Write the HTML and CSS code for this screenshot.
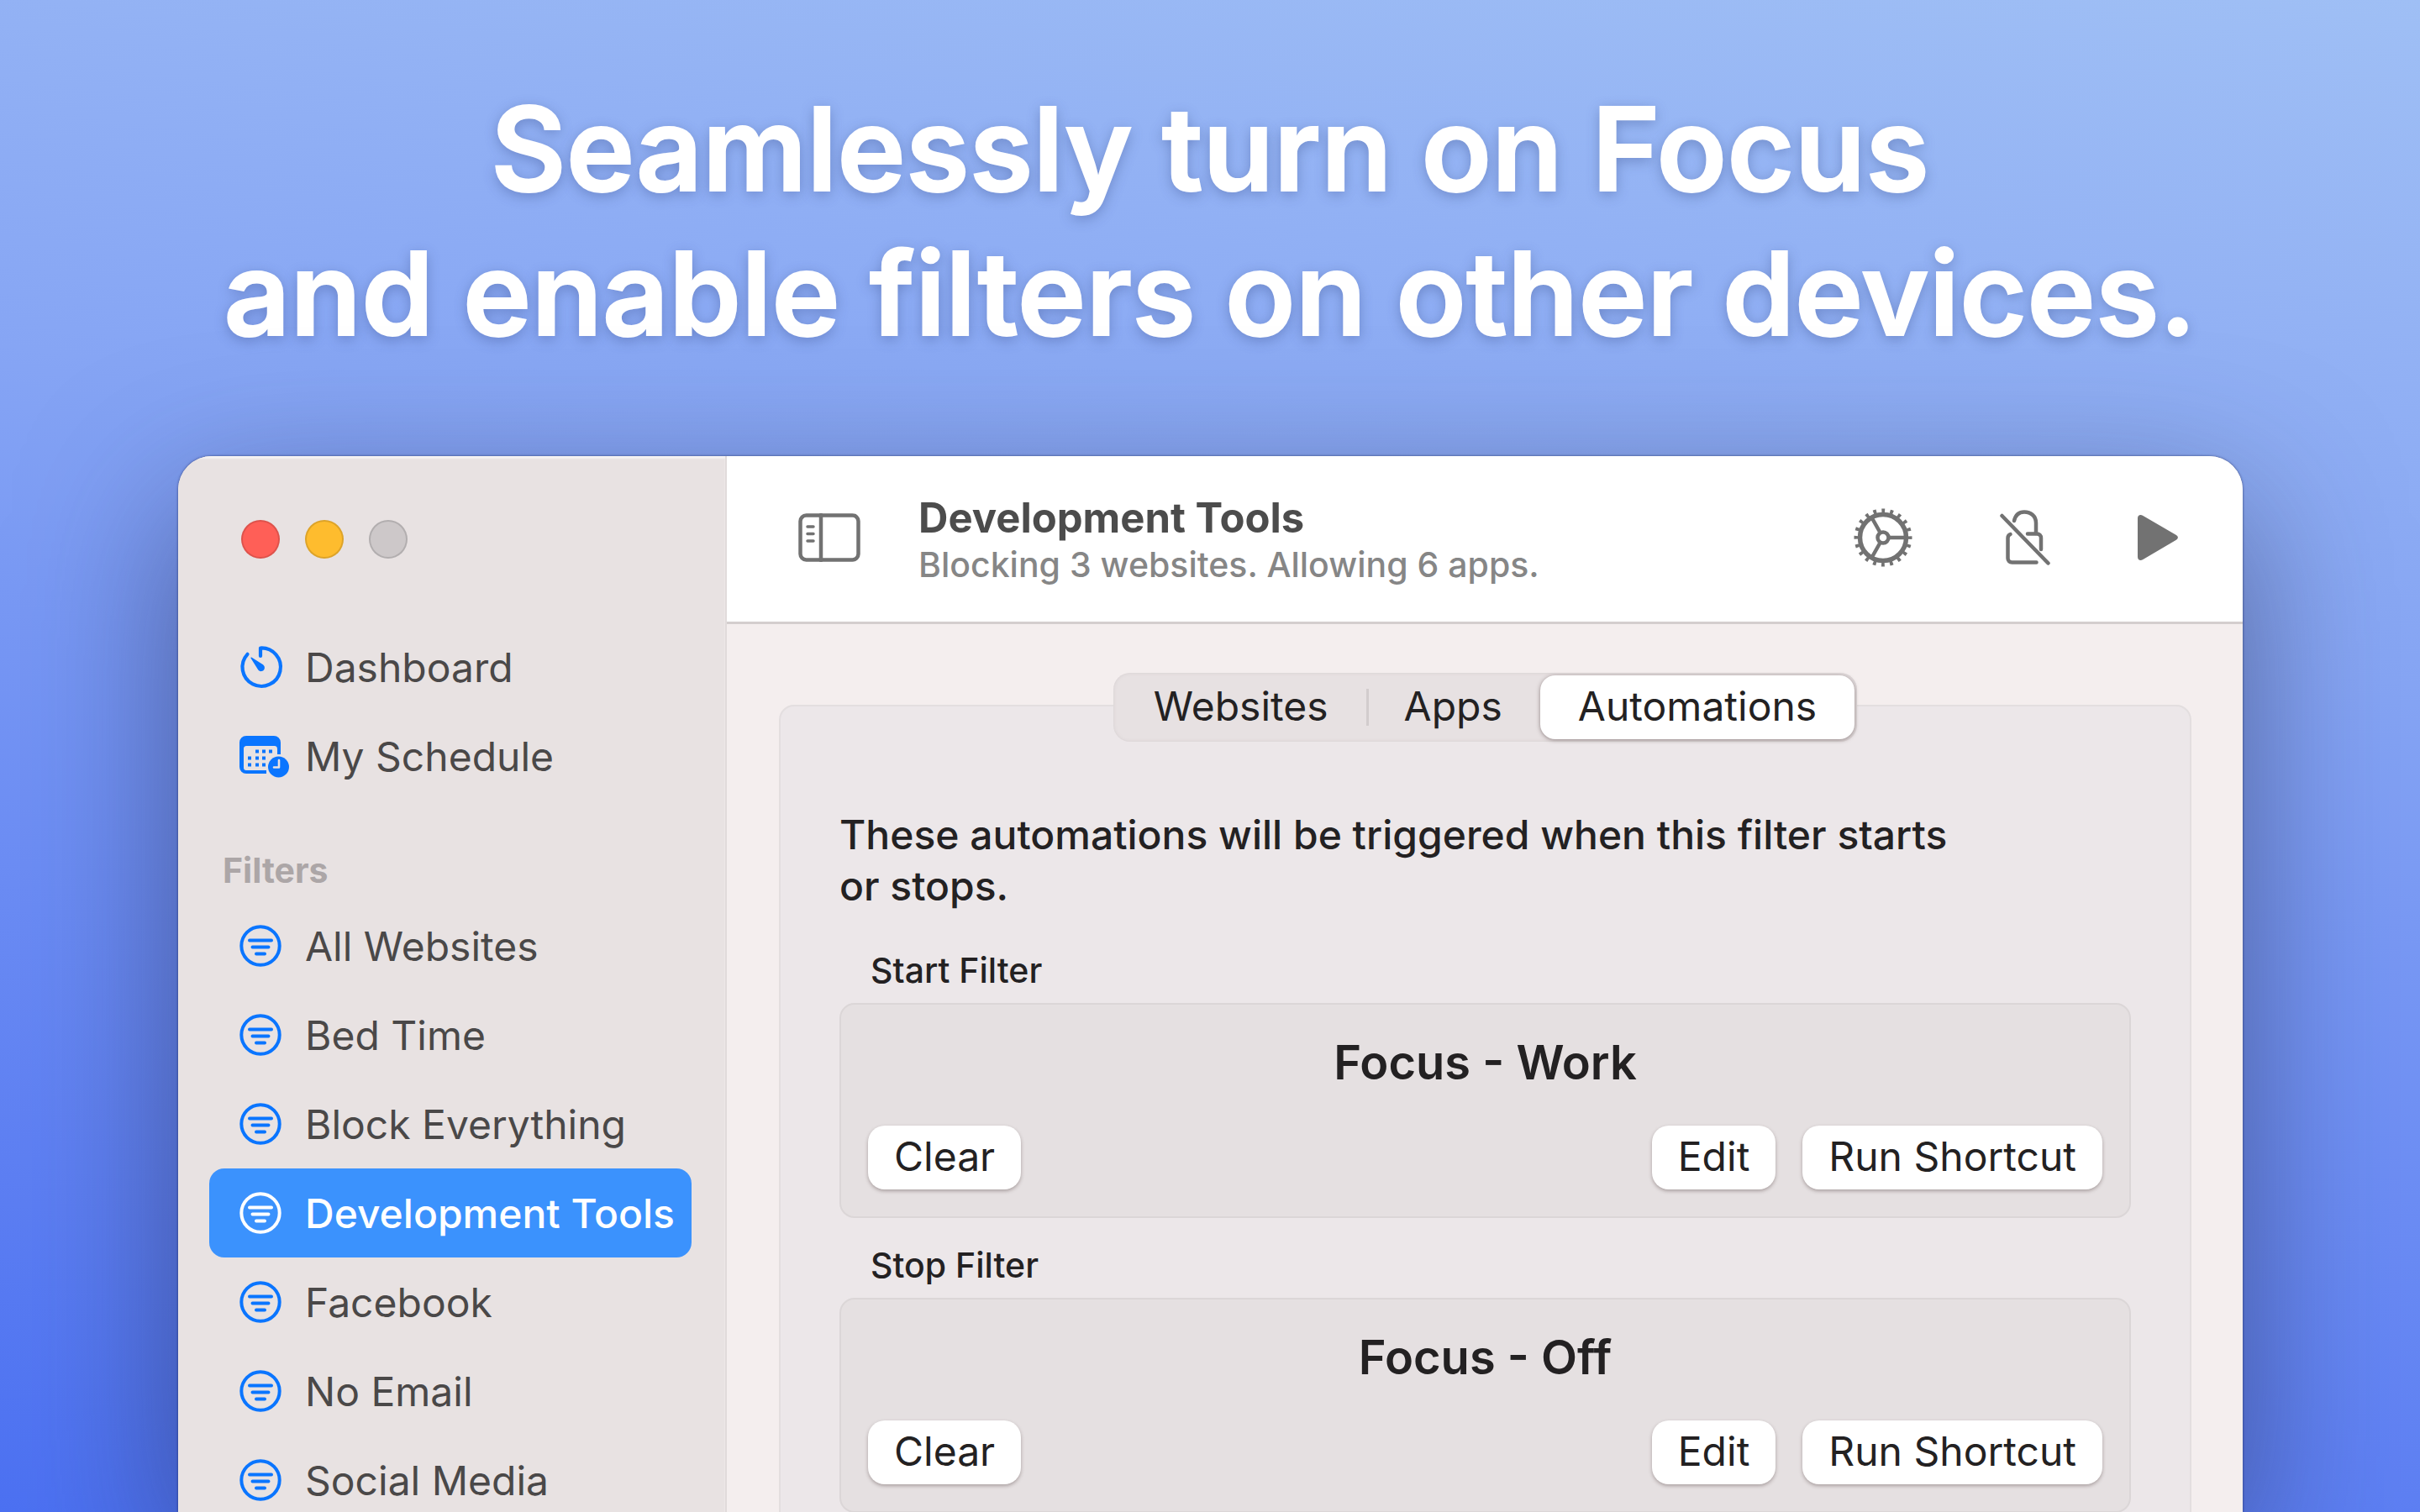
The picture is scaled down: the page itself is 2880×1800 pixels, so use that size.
FILE: index.html
```html
<!DOCTYPE html>
<html lang="en">
<head>
    <meta charset="UTF-8">
    <meta name="viewport" content="width=device-width, initial-scale=1.0">
    <title>Focus automations</title>
    <link rel="stylesheet" href="styles.css">
</head>
<body>
    <!-- Shared icons -->
    <svg class="sprite" aria-hidden="true">
        <symbol id="icon-filter" viewBox="0 0 50 50">
            <g fill="none" stroke="currentColor" stroke-width="4" stroke-linecap="round">
                <circle cx="25" cy="25" r="22.7"/>
                <path d="M12 18.5h26M15.5 26.5h19M20 34.5h10"/>
            </g>
        </symbol>
    </svg>

    <h1 class="headline">Seamlessly turn on Focus<br>and enable filters on other devices.</h1>

    <div class="window">
        <aside class="sidebar">
            <div class="lights">
                <span class="light red"></span>
                <span class="light yellow"></span>
                <span class="light gray"></span>
            </div>
            <nav>
                <a class="item" href="#">
                    <svg class="icon" viewBox="0 0 50 50">
                        <path d="M9.5 9.8A22.7 22.7 0 1 0 25 2.5V12" fill="none" stroke="currentColor" stroke-width="4.2" stroke-linecap="round" stroke-linejoin="round"/>
                        <path d="M13.6 14.8c-.6-.8.3-1.6 1.1-1.1l13.4 8.5c3.4 2.8 1.5 7.6-1.8 7.9-2 .2-3.700-.8-4.500-2.300z" fill="currentColor"/>
                    </svg>
                    Dashboard
                </a>
                <a class="item" href="#">
                    <svg class="icon" viewBox="0 0 50 50">
                        <path d="M8 1h33a8 8 0 0 1 8 8v14h-4V17c0-3-1-4-4-4H9c-3 0-4 1-4 4v22c0 2 1 3 3 3h24v4H8a8 8 0 0 1-8-8V9a8 8 0 0 1 8-8z" fill="currentColor"/>
                        <path d="M19 17.500h4v4h-4zM27 17.500h4v4h-4zM35 17.500h4v4h-4zM10 25.500h4v4h-4zM19 25.500h4v4h-4zM27 25.500h4v4h-4zM10 33.500h4v4h-4zM19 33.500h4v4h-4zM27 33.500h4v4h-4z" fill="currentColor"/>
                        <circle cx="46.500" cy="38" r="12.500" fill="currentColor"/>
                        <path d="M47 30v8.500h-6" fill="none" stroke="#e8e2e2" stroke-width="2.600" stroke-linecap="round" stroke-linejoin="round"/>
                    </svg>
                    My Schedule
                </a>
                <h2 class="group-title">Filters</h2>
                <a class="item" href="#"><svg class="icon"><use href="#icon-filter"/></svg>All Websites</a>
                <a class="item" href="#"><svg class="icon"><use href="#icon-filter"/></svg>Bed Time</a>
                <a class="item" href="#"><svg class="icon"><use href="#icon-filter"/></svg>Block Everything</a>
                <a class="item selected" href="#"><svg class="icon"><use href="#icon-filter"/></svg>Development Tools</a>
                <a class="item" href="#"><svg class="icon"><use href="#icon-filter"/></svg>Facebook</a>
                <a class="item" href="#"><svg class="icon"><use href="#icon-filter"/></svg>No Email</a>
                <a class="item" href="#"><svg class="icon"><use href="#icon-filter"/></svg>Social Media</a>
            </nav>
        </aside>

        <main class="main">
            <header class="toolbar">
                <button class="tool" aria-label="Toggle sidebar">
                    <svg width="74" height="58" viewBox="0 0 74 58" fill="none" stroke="currentColor" stroke-width="4.500" stroke-linecap="round">
                        <rect x="2.500" y="2.500" width="69" height="53" rx="7"/>
                        <path d="M27 2v54"/>
                        <path d="M11 16h7M11 24.500h7M11 33h7" stroke-width="3.500"/>
                    </svg>
                </button>
                <div class="titles">
                    <div class="title">Development Tools</div>
                    <div class="subtitle">Blocking 3 websites. Allowing 6 apps.</div>
                </div>
                <div class="tools">
                    <button class="tool" aria-label="Settings">
                        <svg width="70" height="70" viewBox="-35 -35 70 70" fill="none" stroke="currentColor" stroke-width="4.500">
                            <circle r="27.500" stroke-width="5.500"/>
                            <circle r="32" stroke-width="5" stroke-dasharray="3.800 6.253" stroke-dashoffset="1.900"/>
                            <circle r="6.500"/>
                            <path d="M8 0h18M-4 -7l-9 -16M-4 7l-9 16"/>
                        </svg>
                    </button>
                    <button class="tool" aria-label="Unlock">
                        <svg width="60" height="66" viewBox="0 0 60 66" fill="none" stroke="currentColor" stroke-width="4.500" stroke-linecap="round" stroke-linejoin="round">
                            <path d="M17 13c1.500-6.500 5.500-10.500 12-10.500 8 0 14 5 14 13V28"/>
                            <path d="M33 28.500h11c3 0 5 2 5 5V47"/>
                            <path d="M12.500 29c-2 .8-3 2-3 4.500v24c0 3 2 5 5 5h29"/>
                            <path d="M2.500 7l55 56.500"/>
                        </svg>
                    </button>
                    <button class="tool" aria-label="Start">
                        <svg width="48" height="54" viewBox="0 0 48 54">
                            <path d="M0 4v46c0 3.500 3 5 6 3.200L45.500 30c3.200-2 3.200-4.500 0-6.300L6 .8C3-1 0 .5 0 4z" fill="currentColor"/>
                        </svg>
                    </button>
                </div>
            </header>

            <div class="content">
                <div class="tabs" role="tablist">
                    <button class="tab" role="tab">Websites</button>
                    <button class="tab divided" role="tab">Apps</button>
                    <button class="tab active" role="tab" aria-selected="true">Automations</button>
                </div>
                <section class="panel">
                    <p class="intro">These automations will be triggered when this filter starts or&nbsp;stops.</p>

                    <h3 class="label">Start Filter</h3>
                    <div class="box">
                        <div class="shortcut">Focus - Work</div>
                        <div class="actions">
                            <button class="btn clear">Clear</button>
                            <button class="btn">Edit</button>
                            <button class="btn">Run Shortcut</button>
                        </div>
                    </div>

                    <h3 class="label">Stop Filter</h3>
                    <div class="box">
                        <div class="shortcut">Focus - Off</div>
                        <div class="actions">
                            <button class="btn clear">Clear</button>
                            <button class="btn">Edit</button>
                            <button class="btn">Run Shortcut</button>
                        </div>
                    </div>
                </section>
            </div>
        </main>
    </div>
</body>
</html>
```

FILE: styles.css
```css
* {
    box-sizing: border-box;
}
body {
    margin: 0;
    height: 100vh;
    overflow: hidden;
    display: flex;
    flex-direction: column;
    font-family: Inter, "Liberation Sans", sans-serif;
    font-size: 48px;
    color: #232122;
    background: linear-gradient(188deg, #9fbff5 0%, #93b2f4 18%, #86a5f4 37%, #7999f4 50%, #6b8cf4 66%, #5d7ff3 82%, #4c71f2 100%);
}
.sprite {
    display: none;
}
h1, h2, h3, p {
    margin: 0;
}
button {
    font: inherit;
    color: inherit;
    border: 0;
    padding: 0;
    background: none;
}

/* Headline */
.headline {
    padding: 91px 0 108px;
    font-size: 138px;
    line-height: 172px;
    font-weight: 600;
    text-align: center;
    color: #fff;
    -webkit-text-stroke: 2px #fff;
    text-shadow: 0 4px 16px rgba(50, 70, 130, 0.4);
}

/* App window */
.window {
    flex: 1;
    display: flex;
    margin: 0 211px 0 212px;
    min-height: 0;
    overflow: hidden;
    border-radius: 40px 40px 0 0;
    background: #f4eeee;
    box-shadow: 0 0 3px rgba(20, 30, 80, 0.7), 0 60px 180px rgba(40, 45, 80, 0.55);
}

/* Sidebar */
.sidebar {
    width: 653px;
    flex-shrink: 0;
    padding: 76px 40px 0 37px;
    background: #e8e2e2;
    border-right: 2px solid #e1dbdb;
    box-shadow: inset 0 3px 2px #f6f3f3;
}
.lights {
    display: flex;
    gap: 30px;
    padding-left: 38px;
    margin-bottom: 76px;
}
.light {
    width: 46px;
    height: 46px;
    border-radius: 50%;
    border: 2px solid rgba(0, 0, 0, 0.13);
}
.red {
    background: #ff5f57;
}
.yellow {
    background: #febc2e;
}
.gray {
    background: #cdc8c9;
}
.item {
    display: flex;
    align-items: center;
    gap: 28px;
    height: 106px;
    padding-left: 36px;
    border-radius: 18px;
    color: #4a4848;
    text-decoration: none;
    white-space: nowrap;
}
.icon {
    width: 50px;
    height: 50px;
    flex-shrink: 0;
    overflow: visible;
    color: #0a75ff;
}
.selected {
    background: #3b92fd;
    color: #fff;
    font-weight: 500;
}
.selected .icon {
    color: #fff;
}
.group-title {
    padding: 56px 0 10px 16px;
    font-size: 41px;
    line-height: 54px;
    font-weight: 700;
    color: #aca6a7;
}

/* Toolbar */
.main {
    flex: 1;
    min-width: 0;
    display: flex;
    flex-direction: column;
}
.toolbar {
    display: flex;
    align-items: center;
    height: 200px;
    flex-shrink: 0;
    padding: 0 77px 4px 85px;
    background: #fff;
    border-bottom: 3px solid #d4cece;
}
.tool {
    display: flex;
    color: #727272;
}
.titles {
    margin-left: 69px;
    padding-top: 4px;
}
.title {
    font-size: 49px;
    line-height: 60px;
    font-weight: 700;
    color: #4c4c4c;
}
.subtitle {
    font-size: 41px;
    line-height: 50px;
    font-weight: 500;
    color: #868686;
}
.tools {
    display: flex;
    align-items: center;
    gap: 104px;
    margin-left: auto;
}

/* Content */
.content {
    flex: 1;
    padding: 58px 61px 0 62px;
}
.tabs {
    position: relative;
    display: flex;
    width: max-content;
    height: 82px;
    margin: 0 auto -44px;
    padding: 3px;
    border-radius: 20px;
    background: #e7e1e2;
    box-shadow: inset 0 0 4px #d5cfd0;
}
.tab {
    padding: 0 45px 4px;
}
.divided {
    background: linear-gradient(#d2cccd, #d2cccd) no-repeat left center / 3px 44px;
}
.active {
    border-radius: 18px;
    background: #fff;
    box-shadow: 0 1px 5px rgba(60, 40, 40, 0.5);
}
.panel {
    padding: 122px 70px 80px;
    border: 2px solid #e3dedf;
    border-radius: 18px;
    background: #ece7e9;
}
.intro {
    max-width: 1400px;
    margin-bottom: 14px;
    line-height: 61px;
    font-weight: 500;
}
.label {
    padding: 26px 0 9px 37px;
    font-size: 41px;
    line-height: 60px;
    font-weight: 500;
}
.box {
    padding: 34px 32px 32px;
    border: 2px solid #dbd6d7;
    border-radius: 18px;
    background: #e5e0e1;
}
.shortcut {
    font-size: 56px;
    line-height: 70px;
    font-weight: 600;
    text-align: center;
}
.actions {
    display: flex;
    gap: 32px;
    margin-top: 40px;
}
.btn {
    height: 76px;
    padding: 0 31px 4px;
    border-radius: 20px;
    background: #fff;
    box-shadow: 0 2px 4px rgba(60, 40, 40, 0.35);
}
.clear {
    margin-right: auto;
}
```
